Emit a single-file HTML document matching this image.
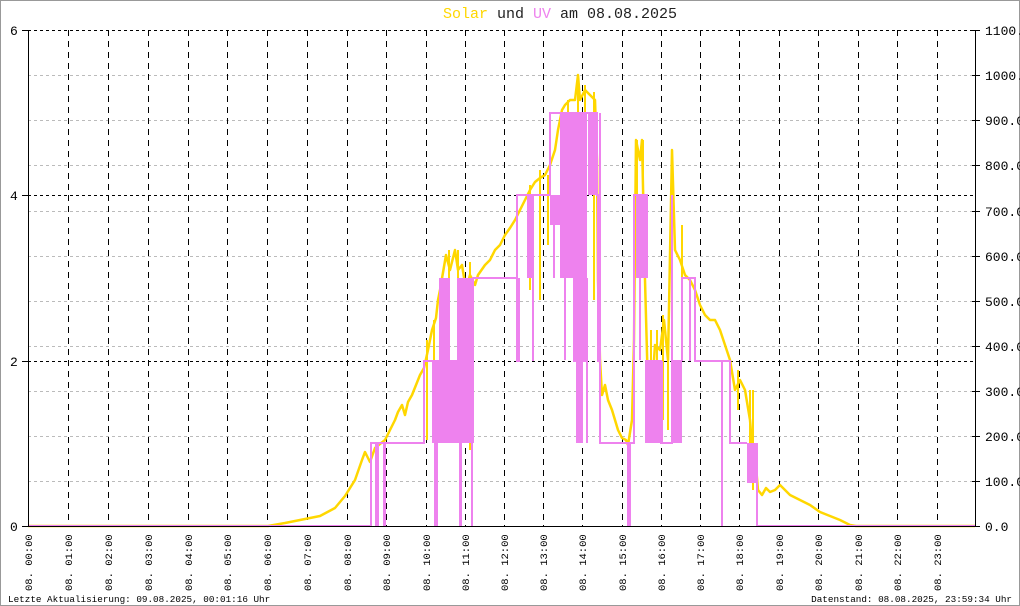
<!DOCTYPE html>
<html><head><meta charset="utf-8"><style>
html,body{margin:0;padding:0;background:#fff}
svg{display:block}
text{font-family:"Liberation Mono",monospace}
</style></head><body>
<svg width="1020" height="606" viewBox="0 0 1020 606" xmlns="http://www.w3.org/2000/svg">
<rect x="0.5" y="0.5" width="1019" height="605" fill="#fff" stroke="#999"/>
<text x="560" y="18" font-size="15" text-anchor="middle"><tspan fill="#ffd700">Solar</tspan><tspan fill="#222"> und </tspan><tspan fill="#ee82ee">UV</tspan><tspan fill="#222"> am 08.08.2025</tspan></text>
<g stroke="#bbb" stroke-width="1" stroke-dasharray="3,3">
<line x1="28" x2="975" y1="75.5" y2="75.5"/><line x1="28" x2="975" y1="120.5" y2="120.5"/><line x1="28" x2="975" y1="165.5" y2="165.5"/><line x1="28" x2="975" y1="211.5" y2="211.5"/><line x1="28" x2="975" y1="256.5" y2="256.5"/><line x1="28" x2="975" y1="301.5" y2="301.5"/><line x1="28" x2="975" y1="346.5" y2="346.5"/><line x1="28" x2="975" y1="391.5" y2="391.5"/><line x1="28" x2="975" y1="436.5" y2="436.5"/><line x1="28" x2="975" y1="481.5" y2="481.5"/>
</g>
<g stroke="#000" stroke-width="1" stroke-dasharray="3,3">
<line x1="28" x2="975" y1="30.5" y2="30.5"/><line x1="28" x2="975" y1="195.5" y2="195.5"/><line x1="28" x2="975" y1="361.5" y2="361.5"/>
</g>
<g stroke="#000" stroke-width="1" stroke-dasharray="6,5">
<line x1="68.5" x2="68.5" y1="30" y2="526"/><line x1="108.5" x2="108.5" y1="30" y2="526"/><line x1="148.5" x2="148.5" y1="30" y2="526"/><line x1="188.5" x2="188.5" y1="30" y2="526"/><line x1="227.5" x2="227.5" y1="30" y2="526"/><line x1="267.5" x2="267.5" y1="30" y2="526"/><line x1="307.5" x2="307.5" y1="30" y2="526"/><line x1="347.5" x2="347.5" y1="30" y2="526"/><line x1="386.5" x2="386.5" y1="30" y2="526"/><line x1="426.5" x2="426.5" y1="30" y2="526"/><line x1="465.5" x2="465.5" y1="30" y2="526"/><line x1="504.5" x2="504.5" y1="30" y2="526"/><line x1="543.5" x2="543.5" y1="30" y2="526"/><line x1="582.5" x2="582.5" y1="30" y2="526"/><line x1="622.5" x2="622.5" y1="30" y2="526"/><line x1="661.5" x2="661.5" y1="30" y2="526"/><line x1="700.5" x2="700.5" y1="30" y2="526"/><line x1="739.5" x2="739.5" y1="30" y2="526"/><line x1="779.5" x2="779.5" y1="30" y2="526"/><line x1="818.5" x2="818.5" y1="30" y2="526"/><line x1="858.5" x2="858.5" y1="30" y2="526"/><line x1="897.5" x2="897.5" y1="30" y2="526"/><line x1="937.5" x2="937.5" y1="30" y2="526"/>
</g>
<!-- yellow solar -->
<polyline fill="none" stroke="#ffd700" stroke-width="2.5" stroke-linejoin="round" points="28,526 268,526 285,523 300,520 320,516 335,508 345,496 355,480 362,460 365,452 370,462 375,448 385,440 390,430 395,420 398,412 402,405 405,415 408,402 412,395 416,385 420,375 424,368 428,350 432,330 436,318 438,300 440,290 446,255 450,270 455,250 458,270 462,265 466,290 470,275 475,285 478,275 485,265 490,260 495,250 500,245 505,235 510,228 515,220 520,210 525,200 530,190 535,182 540,178 545,175 550,165 555,150 558,130 562,110 565,105 570,100 575,100 578,75 580,100 585,90 590,95 595,100 597,160 598,280 600,360 602,395 605,385 608,400 612,410 618,430 622,438 626,440 628,445 632,420 634,340 636,140 640,160 642,140 645,280 648,390 650,420 655,345 660,350 664,320 668,360 672,150 675,250 680,260 685,275 690,280 695,290 700,305 705,315 710,320 715,320 720,330 725,345 730,360 735,390 740,380 745,390 750,420 752,445 755,455 758,490 762,495 766,488 770,492 775,490 780,485 785,490 790,495 800,500 810,505 820,512 830,516 840,520 850,525 856,526 975,526"/>
<g stroke="#ffd700" stroke-width="2">
<line x1="449" y1="250" x2="449" y2="380"/><line x1="458" y1="250" x2="458" y2="400"/><line x1="470" y1="262" x2="470" y2="450"/><line x1="540" y1="170" x2="540" y2="300"/><line x1="578" y1="75" x2="578" y2="140"/><line x1="594" y1="92" x2="594" y2="300"/><line x1="637" y1="140" x2="637" y2="260"/><line x1="643" y1="140" x2="643" y2="230"/><line x1="672" y1="150" x2="672" y2="360"/><line x1="663" y1="315" x2="663" y2="420"/><line x1="682" y1="225" x2="682" y2="300"/><line x1="753" y1="390" x2="753" y2="490"/><line x1="427" y1="340" x2="427" y2="440"/><line x1="434" y1="320" x2="434" y2="440"/>
<line x1="530" y1="185" x2="530" y2="290"/><line x1="548" y1="175" x2="548" y2="245"/><line x1="568" y1="100" x2="568" y2="220"/><line x1="585" y1="85" x2="585" y2="180"/><line x1="599" y1="280" x2="599" y2="360"/><line x1="651" y1="330" x2="651" y2="420"/><line x1="657" y1="330" x2="657" y2="440"/><line x1="668" y1="340" x2="668" y2="430"/><line x1="738" y1="370" x2="738" y2="410"/><line x1="750" y1="390" x2="750" y2="460"/>
</g>
<!-- pink UV -->
<g fill="#ee82ee">
<rect x="439" y="278" width="11" height="165"/><rect x="445" y="360" width="15" height="83"/><rect x="457" y="278" width="16" height="165"/><rect x="432" y="360" width="8" height="83"/>
<rect x="560" y="113" width="27" height="165"/><rect x="573" y="278" width="14" height="84"/><rect x="576" y="278" width="7" height="165"/><rect x="588" y="113" width="9" height="82"/>
<rect x="636" y="195" width="11" height="83"/><rect x="645" y="360" width="17" height="83"/><rect x="672" y="360" width="10" height="83"/><rect x="747" y="443" width="10" height="40"/>
<rect x="550" y="195" width="10" height="30"/><rect x="527" y="195" width="5" height="83"/><rect x="434" y="443" width="4" height="83"/><rect x="459" y="443" width="3" height="83"/><rect x="471" y="443" width="2" height="83"/>
</g>
<g stroke="#ee82ee" stroke-width="2"><line x1="600" y1="113" x2="600" y2="360"/><line x1="565" y1="278" x2="565" y2="360"/><line x1="554" y1="195" x2="554" y2="278"/><line x1="640" y1="278" x2="640" y2="360"/><line x1="690" y1="278" x2="690" y2="361"/></g>
<path fill="none" stroke="#ee82ee" stroke-width="2" d="M28,526 H371 V443 H376 V526 H378 V443 H384 V526 H385 V443 H424 V361 H432 M473,443 V278 H517 V195 H550 V113 H597 V195 H598 V361 H600 V443 H628 V526 H630 V443 H634 V278 V195 H647 V278 M660,443 H672 V195 M682,361 V278 H695 V361 H730 V443 H747 M722,361 V526 M757,443 V526 H975 M517,195 V361 H519 V278 M533,195 V361 M587,278 V443 M662,443 V361"/>
<line x1="28.5" y1="30" x2="28.5" y2="526" stroke="#000"/>
<line x1="975.5" y1="30" x2="975.5" y2="526" stroke="#000"/>
<line x1="22" y1="526.5" x2="975" y2="526.5" stroke="#000"/>
<g stroke="#000"><line x1="22" x2="28" y1="30.5" y2="30.5"/><line x1="22" x2="28" y1="195.5" y2="195.5"/><line x1="22" x2="28" y1="361.5" y2="361.5"/>
<line x1="972" x2="980" y1="30.5" y2="30.5"/><line x1="972" x2="980" y1="75.5" y2="75.5"/><line x1="972" x2="980" y1="120.5" y2="120.5"/><line x1="972" x2="980" y1="165.5" y2="165.5"/><line x1="972" x2="980" y1="211.5" y2="211.5"/><line x1="972" x2="980" y1="256.5" y2="256.5"/><line x1="972" x2="980" y1="301.5" y2="301.5"/><line x1="972" x2="980" y1="346.5" y2="346.5"/><line x1="972" x2="980" y1="391.5" y2="391.5"/><line x1="972" x2="980" y1="436.5" y2="436.5"/><line x1="972" x2="980" y1="481.5" y2="481.5"/><line x1="972" x2="980" y1="526.5" y2="526.5"/></g>
<g font-size="13" fill="#000">
<text x="10" y="35">6</text><text x="10" y="200">4</text><text x="10" y="366">2</text><text x="10" y="531">0</text>
<text x="985" y="35">1100.0</text><text x="985" y="80">1000.0</text><text x="985" y="125">900.0</text><text x="985" y="170">800.0</text><text x="985" y="216">700.0</text><text x="985" y="261">600.0</text><text x="985" y="306">500.0</text><text x="985" y="351">400.0</text><text x="985" y="396">300.0</text><text x="985" y="441">200.0</text><text x="985" y="486">100.0</text><text x="985" y="531">0.0</text>
</g>
<g font-size="10.5" fill="#000">
<text transform="translate(32,591) rotate(-90)">08. 00:00</text><text transform="translate(72,591) rotate(-90)">08. 01:00</text><text transform="translate(112,591) rotate(-90)">08. 02:00</text><text transform="translate(152,591) rotate(-90)">08. 03:00</text><text transform="translate(192,591) rotate(-90)">08. 04:00</text><text transform="translate(231,591) rotate(-90)">08. 05:00</text><text transform="translate(271,591) rotate(-90)">08. 06:00</text><text transform="translate(311,591) rotate(-90)">08. 07:00</text><text transform="translate(351,591) rotate(-90)">08. 08:00</text><text transform="translate(390,591) rotate(-90)">08. 09:00</text><text transform="translate(430,591) rotate(-90)">08. 10:00</text><text transform="translate(469,591) rotate(-90)">08. 11:00</text><text transform="translate(508,591) rotate(-90)">08. 12:00</text><text transform="translate(547,591) rotate(-90)">08. 13:00</text><text transform="translate(586,591) rotate(-90)">08. 14:00</text><text transform="translate(626,591) rotate(-90)">08. 15:00</text><text transform="translate(665,591) rotate(-90)">08. 16:00</text><text transform="translate(704,591) rotate(-90)">08. 17:00</text><text transform="translate(743,591) rotate(-90)">08. 18:00</text><text transform="translate(783,591) rotate(-90)">08. 19:00</text><text transform="translate(822,591) rotate(-90)">08. 20:00</text><text transform="translate(862,591) rotate(-90)">08. 21:00</text><text transform="translate(901,591) rotate(-90)">08. 22:00</text><text transform="translate(941,591) rotate(-90)">08. 23:00</text>
</g>
<g font-size="9.3" fill="#000">
<text x="8" y="602">Letzte Aktualisierung: 09.08.2025, 00:01:16 Uhr</text>
<text x="1012" y="602" text-anchor="end">Datenstand: 08.08.2025, 23:59:34 Uhr</text>
</g>
</svg>
</body></html>
